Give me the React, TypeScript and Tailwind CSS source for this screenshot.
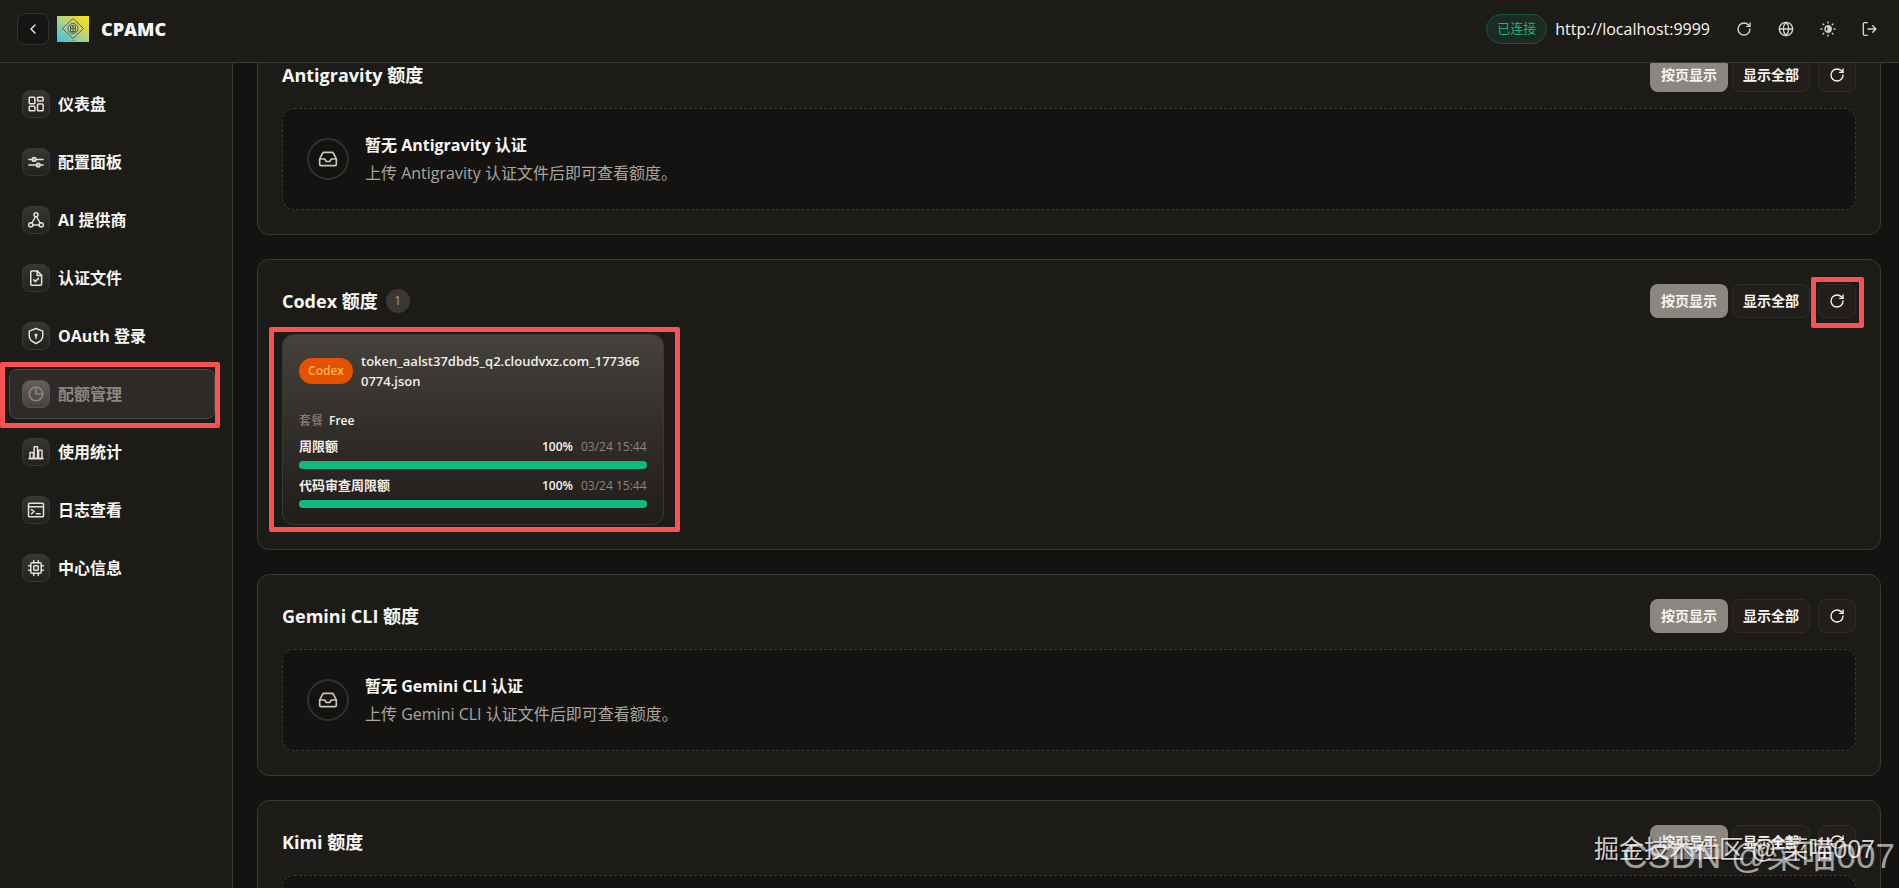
import type { ReactNode } from "react";

type IconProps = { size?: number; className?: string; children?: ReactNode };

function Icon({ size = 16, className, children }: IconProps) {
  return (
    <svg
      width={size}
      height={size}
      viewBox="0 0 24 24"
      fill="none"
      stroke="currentColor"
      strokeWidth="2"
      strokeLinecap="round"
      strokeLinejoin="round"
      className={className}
      aria-hidden="true"
    >
      {children}
    </svg>
  );
}

function RefreshIcon({ size }: { size?: number }) {
  return (
    <Icon size={size}>
      <path d="M21 12a9 9 0 1 1-9-9c2.52 0 4.93 1 6.74 2.74L21 8" />
      <path d="M21 3v5h-5" />
    </Icon>
  );
}

function InboxIcon() {
  return (
    <Icon size={20}>
      <path d="M22 12h-6l-2 3h-4l-2-3H2" />
      <path d="M5.45 5.11 2 12v6a2 2 0 0 0 2 2h16a2 2 0 0 0 2-2v-6l-3.45-6.89A2 2 0 0 0 16.76 4H7.24a2 2 0 0 0-1.79 1.11z" />
    </Icon>
  );
}

const navItems: { label: string; active?: boolean; icon: ReactNode }[] = [
  {
    label: "仪表盘",
    icon: (
      <>
        <rect x="3" y="3" width="7.5" height="8.5" rx="1" />
        <rect x="14" y="3" width="7.5" height="5" rx="1" />
        <rect x="14" y="12" width="7.5" height="9" rx="1" />
        <rect x="3" y="15" width="7.5" height="6" rx="1" />
      </>
    ),
  },
  {
    label: "配置面板",
    icon: (
      <>
        <path d="M2.500 8.500H7M12 8.500h9.500M2.500 16H12M18 16h3.500" />
        <circle cx="9.5" cy="8.5" r="2.5" fill="currentColor" fillOpacity="0.6" />
        <circle cx="15" cy="16" r="2.5" fill="currentColor" fillOpacity="0.6" />
      </>
    ),
  },
  {
    label: "AI 提供商",
    icon: (
      <>
        <circle cx="12" cy="5" r="2.7" />
        <circle cx="5" cy="18.5" r="2.7" />
        <circle cx="19" cy="18.5" r="2.7" />
        <path d="M11 8 6.500 16M13 8l4.500 8M8 18.500h8" />
      </>
    ),
  },
  {
    label: "认证文件",
    icon: (
      <>
        <path d="M13.500 2.500H6.500a1.500 1.500 0 0 0-1.500 1.500v16a1.500 1.500 0 0 0 1.500 1.500h11.500a1.500 1.500 0 0 0 1.500-1.500V8.500z" />
        <path d="M13.500 2.500v6h6M9 14.500l2.300 2.300 4-4.300" />
      </>
    ),
  },
  {
    label: "OAuth 登录",
    icon: (
      <>
        <path d="M12 22s9-4 9-10V5.500L12 2 3 5.500V12c0 6 9 10 9 10z" />
        <circle cx="12" cy="10.5" r="1" fill="currentColor" />
        <path d="M12 11v4" />
      </>
    ),
  },
  {
    label: "配额管理",
    active: true,
    icon: (
      <>
        <circle cx="12" cy="12" r="9" />
        <path d="M12 3v9h9" />
      </>
    ),
  },
  {
    label: "使用统计",
    icon: (
      <>
        <path d="M2.500 20.500h19" />
        <rect x="4" y="12.5" width="4.500" height="8" />
        <rect x="9.500" y="5" width="4.500" height="15.500" />
        <rect x="15.500" y="9.500" width="4.500" height="11" />
      </>
    ),
  },
  {
    label: "日志查看",
    icon: (
      <>
        <rect x="2" y="3" width="20" height="18" rx="1.500" />
        <path d="M2 7.500h20M6 11.500l3.500 2.500L6 17M12.500 17h5" />
      </>
    ),
  },
  {
    label: "中心信息",
    icon: (
      <>
        <rect x="5" y="5" width="14" height="14" rx="2" />
        <rect x="9" y="9" width="6" height="6" rx="1" />
        <path d="M9 2v3M15 2v3M9 19v3M15 19v3M2 9h3M2 15h3M19 9h3M19 15h3" />
      </>
    ),
  },
];

const quotas = [
  { label: "周限额", percent: 100, reset: "03/24 15:44" },
  { label: "代码审查周限额", percent: 100, reset: "03/24 15:44" },
];

// red frame drawn over whatever relative box it is put in
function Highlight({ className }: { className: string }) {
  return <div className={`pointer-events-none absolute z-10 rounded-xs border-5 border-[#fa5252] ${className}`} />;
}

function Logo() {
  return (
    <svg width="32" height="26" viewBox="0 0 32 26" aria-hidden="true">
      <defs>
        <linearGradient id="logo-bg" x1="0" y1="1" x2="1" y2="0">
          <stop offset="0" stopColor="#2cc4e4" />
          <stop offset="0.5" stopColor="#b5d088" />
          <stop offset="1" stopColor="#ffe600" />
        </linearGradient>
      </defs>
      <rect width="32" height="26" fill="url(#logo-bg)" />
      <g fill="none" stroke="#4a5244">
        <path d="M16 2.500 26.500 12.500 16 22.500 5.500 12.500z" strokeWidth="0.9" />
        <circle cx="16" cy="12.500" r="5" strokeWidth="0.9" />
        <path d="M13.500 10h5v5.500h-5zM16 9v8M13.500 12.500h5" strokeWidth="0.9" />
      </g>
      <path d="M14 24.500h4" stroke="#6f7a60" strokeWidth="0.6" />
    </svg>
  );
}

function Header() {
  return (
    <header className="flex h-[63px] shrink-0 items-center border-b border-[#3a3834] bg-[#1d1b18] pr-[11px] pb-1 pl-[17px]">
      <button
        aria-label="收起侧边栏"
        className="flex size-8 items-center justify-center rounded-lg border border-[#33312d] bg-[#171513] text-[#f0eeea]"
      >
        <Icon>
          <path d="m15 18-6-6 6-6" />
        </Icon>
      </button>
      <div className="ml-2 flex items-center gap-3">
        <Logo />
        <span className="text-lg font-extrabold text-[#f7f5f2]">CPAMC</span>
      </div>
      <div className="ml-auto flex items-center">
        <span className="flex h-[30px] items-center rounded-full border border-[#17553f] bg-[#1b2a22] px-[10px] text-[13px] text-[#1fb182]">
          已连接
        </span>
        <span className="ml-2 font-medium text-[#f7f5f2]">http://localhost:9999</span>
        <div className="ml-4 flex gap-[6px] text-[#d8d5d0]">
          <button aria-label="刷新" className="flex size-9 items-center justify-center">
            <RefreshIcon />
          </button>
          <button aria-label="语言" className="flex size-9 items-center justify-center">
            <Icon>
              <circle cx="12" cy="12" r="10" />
              <path d="M2 12h20M12 2c3 3 4 6.500 4 10s-1 7-4 10c-3-3-4-6.500-4-10s1-7 4-10z" />
            </Icon>
          </button>
          <button aria-label="主题" className="flex size-9 items-center justify-center">
            <Icon>
              <circle cx="12" cy="12" r="4.500" />
              <path d="M12 7.500a4.500 4.500 0 0 1 0 9z" fill="currentColor" />
              <path d="M12 1.500v1.500M12 21v1.500M1.500 12H3M21 12h1.500M4.600 4.600l1 1M18.400 18.400l1 1M4.600 19.400l1-1M18.400 5.600l1-1" />
            </Icon>
          </button>
          <button aria-label="退出" className="flex size-9 items-center justify-center">
            <Icon>
              <path d="M8 21.500H4a2 2 0 0 1-2-2v-15a2 2 0 0 1 2-2h4" />
              <path d="m16 17 5-5-5-5M21 12H9" />
            </Icon>
          </button>
        </div>
      </div>
    </header>
  );
}

function Sidebar() {
  return (
    <nav className="flex w-[233px] shrink-0 flex-col gap-2 border-r border-[#3a3834] bg-[#1d1b18] pl-[9px] pr-[17px] pt-4">
      {navItems.map((item) => (
        <a
          key={item.label}
          href="#"
          className={`relative flex h-[50px] items-center gap-2 rounded-lg border px-3 font-bold ${
            item.active ? "border-[#4a4744] bg-[#2e2a27] text-[#8b8680]" : "border-transparent text-[#f7f5f2]"
          }`}
        >
          <span
            className={`flex size-7 items-center justify-center rounded-lg border ${
              item.active
                ? "border-[#55524f] bg-linear-to-b from-[#62605d] to-[#454240]"
                : "border-[#3a3835] bg-linear-to-b from-[#383633] to-[#23211e] text-[#e4e1dc]"
            }`}
          >
            <Icon size={18}>{item.icon}</Icon>
          </span>
          {item.label}
          {item.active && <Highlight className="-left-[10px] -right-[6px] -top-2 -bottom-[10px]" />}
        </a>
      ))}
    </nav>
  );
}

function Section({
  title,
  count,
  highlightRefresh,
  children,
}: {
  title: string;
  count?: number;
  highlightRefresh?: boolean;
  children: ReactNode;
}) {
  return (
    <section className="rounded-xl border border-[#3a3834] bg-[#1d1b18] p-6">
      <div className="mb-4 flex h-[34px] items-center justify-between">
        <div className="flex items-center gap-2">
          <h2 className="text-lg font-bold text-[#f7f5f2]">{title}</h2>
          {count !== undefined && (
            <span className="flex size-6 items-center justify-center rounded-full bg-[#3a3735] text-xs text-[#a8a39d]">
              {count}
            </span>
          )}
        </div>
        <div className="flex text-sm font-bold text-[#f7f5f2]">
          <button className="h-[34px] w-[78px] rounded-lg bg-[#8b8680]">按页显示</button>
          <button className="ml-1 h-[34px] w-[78px] rounded-lg border border-[#2f2c2a] bg-[#211e1c]">显示全部</button>
          <div className="relative ml-2">
            <button
              aria-label="刷新额度"
              className="flex h-[34px] w-[38px] items-center justify-center rounded-lg border border-[#2f2c2a] bg-[#211e1c]"
            >
              <RefreshIcon />
            </button>
            {highlightRefresh && <Highlight className="-left-[7px] -right-2 -top-[7px] -bottom-[10px]" />}
          </div>
        </div>
      </div>
      {children}
    </section>
  );
}

function EmptyState({ name }: { name: string }) {
  return (
    <div className="flex items-center gap-4 rounded-xl border border-dashed border-[#3a3834] bg-[#151311] p-6">
      <div className="flex size-[42px] items-center justify-center rounded-full border-2 border-[#33312e] text-[#c9c5bf]">
        <InboxIcon />
      </div>
      <div className="space-y-1">
        <p className="font-bold text-[#f7f5f2]">暂无 {name} 认证</p>
        <p className="text-[#aaa59f]">上传 {name} 认证文件后即可查看额度。</p>
      </div>
    </div>
  );
}

function CodexCard() {
  return (
    <div className="relative rounded-xl border border-[#3a3834] bg-linear-to-b from-[#45423c] to-[#1f1c1a] p-4">
      <div className="flex items-center gap-2">
        <span className="flex h-[26px] w-[54px] shrink-0 items-center justify-center rounded-full bg-[#e65100] text-xs font-semibold text-[#ffb74d]">
          Codex
        </span>
        <p className="pr-0.5 text-[13px] leading-5 font-semibold break-all text-[#f0eeea]">
          token_aalst37dbd5_q2.cloudvxz.com_1773660774.json
        </p>
      </div>
      <div className="mt-5 flex h-5 items-center gap-[6px] text-xs">
        <span className="text-[#8b8680]">套餐</span>
        <span className="font-semibold text-[#f7f5f2]">Free</span>
      </div>
      <div className="mt-[6px] space-y-[7px]">
        {quotas.map((q) => (
          <div key={q.label}>
            <div className="mb-1 flex h-5 items-center gap-2 text-[13px]">
              <span className="mr-auto font-bold text-[#f0eeea]">{q.label}</span>
              <span className="text-xs font-semibold text-[#f7f5f2]">{q.percent}%</span>
              <span className="text-xs text-[#8b8680]">{q.reset}</span>
            </div>
            <div className="h-2 rounded-full bg-[#3a3834]">
              <div className="h-2 rounded-full bg-[#10b981]" style={{ width: `${q.percent}%` }} />
            </div>
          </div>
        ))}
      </div>
      <Highlight className="-left-[14px] -right-[17px] -top-2 -bottom-2" />
    </div>
  );
}

export default function App() {
  return (
    <div className="relative flex h-screen flex-col overflow-hidden bg-[#151311] font-['Open_Sans','Noto_Sans_CJK_SC',sans-serif] text-base">
      <Header />
      <div className="flex min-h-0 flex-1">
        <Sidebar />
        <main className="min-w-0 flex-1 overflow-hidden pl-6 pr-[18px]">
          <div className="-mt-[30px] space-y-6">
            <Section title="Antigravity 额度">
              <EmptyState name="Antigravity" />
            </Section>
            <Section title="Codex 额度" count={1} highlightRefresh>
              <div className="grid grid-cols-[repeat(auto-fill,minmax(380px,1fr))] gap-4">
                <CodexCard />
              </div>
            </Section>
            <Section title="Gemini CLI 额度">
              <EmptyState name="Gemini CLI" />
            </Section>
            <Section title="Kimi 额度">
              <EmptyState name="Kimi" />
            </Section>
          </div>
        </main>
      </div>
      <div className="pointer-events-none absolute right-6 bottom-5 z-20 font-['Liberation_Sans','Noto_Sans_CJK_SC',sans-serif] text-[25px] text-white/80 [text-shadow:1px_1px_2px_#000]">
        掘金技术社区 @ 菜喵007
      </div>
      <div className="pointer-events-none absolute right-1 bottom-3 z-20 font-['Liberation_Sans','Noto_Sans_CJK_SC',sans-serif] text-[35px] leading-10 text-white/60">
        CSDN @菜喵007
      </div>
    </div>
  );
}
